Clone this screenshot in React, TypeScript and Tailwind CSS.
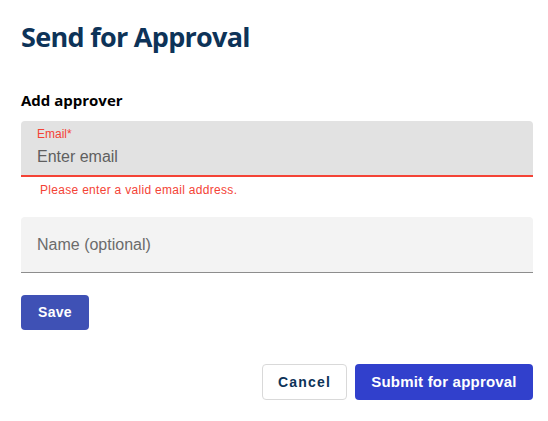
import React from "react";

export default function App() {
  return (
    <div className="min-h-[421px] w-[548px] bg-white font-['Liberation_Sans',Arial,sans-serif]">
      <div className="ml-[21px] w-[512px] pt-[20px]">
        <h1 className="font-['Open_Sans',sans-serif] text-[27px] leading-[34px] font-bold text-[#0d3358] tracking-[-0.7px]">
          Send for Approval
        </h1>

        <h2 className="mt-[36px] font-['Open_Sans',sans-serif] text-[15px] leading-[20px] font-bold text-black">
          Add approver
        </h2>

        {/* email field, invalid */}
        <div className="mt-[11px]">
          <div className="h-[56px] rounded-t-[4px] bg-[#e2e2e2] border-b-2 border-[#f44336] px-4 pt-[6px]">
            <label className="block text-[12px] leading-[14px] text-[#f44336]">Email*</label>
            <input
              type="email"
              placeholder="Enter email"
              className="mt-[6px] w-full bg-transparent text-[16px] leading-[20px] outline-none placeholder:text-[#5f5f5f] caret-[#f44336]"
            />
          </div>
          <p className="mt-[6px] pl-[19px] text-[12px] leading-[14px] tracking-[0.3px] text-[#f44336]">
            Please enter a valid email address.
          </p>
        </div>

        {/* name field */}
        <div className="mt-[20px] h-[56px] rounded-t-[4px] bg-[#f3f3f3] border-b border-[#8d8d8d] px-4 flex items-center">
          <input
            type="text"
            placeholder="Name (optional)"
            className="w-full bg-transparent text-[16px] outline-none placeholder:text-[#6b6b6b]"
          />
        </div>

        <button className="mt-[22px] h-[35px] w-[68px] rounded-[4px] bg-[#3f51b5] text-[14px] font-bold text-white tracking-[0.3px]">
          Save
        </button>

        <div className="mt-[34px] flex justify-end gap-2">
          <button className="h-[36px] w-[85px] rounded-[4px] border border-[#d9d9d9] bg-white text-[14px] font-bold tracking-[1.2px] text-[#0d3358]">
            Cancel
          </button>
          <button className="h-[36px] w-[178px] rounded-[4px] bg-[#3140cc] text-[15px] font-bold tracking-[0.2px] text-white">
            Submit for approval
          </button>
        </div>
      </div>
    </div>
  );
}
